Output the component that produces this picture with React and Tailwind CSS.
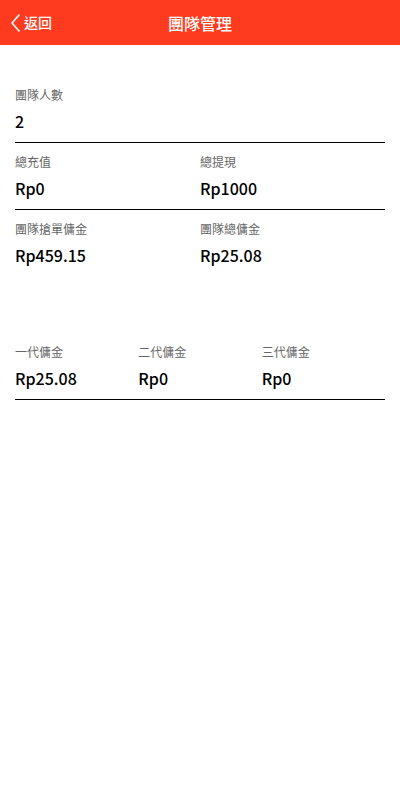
import React from "react";

const font = { fontFamily: '"Noto Sans CJK TC", "Noto Sans", sans-serif' };

function Stat({ label, value }) {
  return (
    <div className="flex flex-col">
      <p className="text-[12px] leading-4 text-[#666]">{label}</p>
      <p className="mt-[6px] text-[16px] font-medium leading-6 text-black">{value}</p>
    </div>
  );
}

export default function App() {
  const rows = [
    [
      { label: "總充值", value: "Rp0" },
      { label: "總提現", value: "Rp1000" },
    ],
    [
      { label: "團隊搶單傭金", value: "Rp459.15" },
      { label: "團隊總傭金", value: "Rp25.08" },
    ],
  ];
  const levels = [
    { label: "一代傭金", value: "Rp25.08" },
    { label: "二代傭金", value: "Rp0" },
    { label: "三代傭金", value: "Rp0" },
  ];

  return (
    <div className="min-h-[800px] w-[400px] bg-white" style={font}>
      <header className="relative flex h-[45px] items-center justify-center bg-[#ff3b1f] text-white">
        <button className="absolute left-[10px] top-0 flex h-full items-center gap-[3px] text-[14px] font-medium">
          <svg width="11" height="20" viewBox="0 0 11 20" fill="none">
            <path d="M9 2 L2 10 L9 18" stroke="white" strokeWidth="1.6" strokeLinecap="round" strokeLinejoin="round" />
          </svg>
          <span>返回</span>
        </button>
        <h1 className="text-[16px] font-medium">團隊管理</h1>
      </header>

      <main className="px-[15px]">
        <section className="border-b border-black pb-[9px] pt-[42px]">
          <Stat label="團隊人數" value="2" />
        </section>
        {rows.map((row, i) => (
          <section
            key={i}
            className={`grid grid-cols-2 pb-[9px] pt-[11px] ${i === 0 ? "border-b border-black" : ""}`}
          >
            {row.map((s) => (
              <Stat key={s.label} label={s.label} value={s.value} />
            ))}
          </section>
        ))}
        <section className="mt-[68px] grid grid-cols-3 border-b border-black pb-[9px]">
          {levels.map((s) => (
            <Stat key={s.label} label={s.label} value={s.value} />
          ))}
        </section>
      </main>
    </div>
  );
}
